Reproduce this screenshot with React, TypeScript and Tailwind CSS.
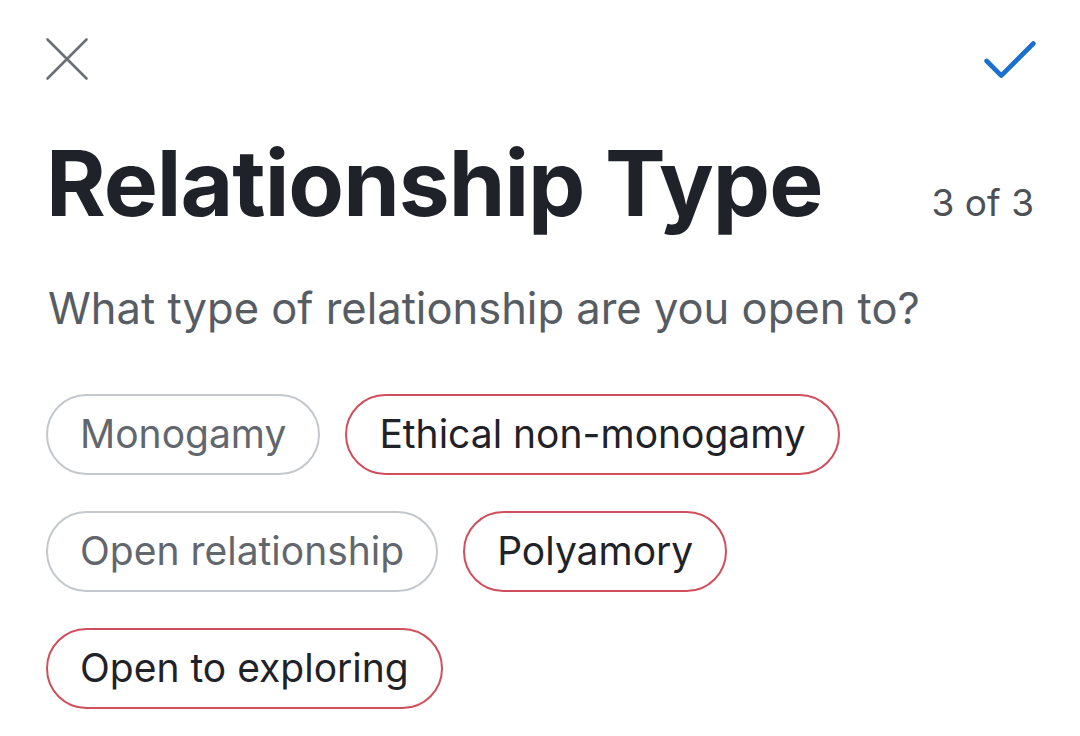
import { Check, X } from "lucide-react";

const OPTIONS = [
  { label: "Monogamy", selected: false },
  { label: "Ethical non-monogamy", selected: true },
  { label: "Open relationship", selected: false },
  { label: "Polyamory", selected: true },
  { label: "Open to exploring", selected: true },
];

function Chip({ label, selected }: { label: string; selected: boolean }) {
  return (
    <div
      className={
        selected
          ? "flex h-[81px] items-center rounded-full border-[2.5px] border-[#d04f5d] px-[32px] text-[39px] text-[#1f2227]"
          : "flex h-[81px] items-center rounded-full border-2 border-[#c4c8cc] px-[32px] text-[39px] text-[#62676d]"
      }
    >
      {label}
    </div>
  );
}

export default function App() {
  return (
    <div className="h-[736px] w-[1080px] bg-white font-['Inter',sans-serif]">
      <div className="flex items-start justify-between pl-[28px] pr-[35px] pt-[20px]">
        <X aria-hidden className="h-[78px] w-[78px] text-[#6c7076]" strokeWidth={0.8} />
        <Check aria-hidden className="mt-[6px] h-[70px] w-[70px] text-[#1b6fce]" strokeWidth={1.6} />
      </div>

      <div className="mt-[40px] flex items-baseline justify-between pl-[46px] pr-[46px]">
        <h1 className="text-[91px] font-bold leading-none tracking-[-1px] text-[#1f2228]">
          Relationship Type
        </h1>
        <span className="text-[37px] text-[#4d5157]">3 of 3</span>
      </div>

      <p className="mt-[56px] pl-[48px] text-[43.5px] leading-none text-[#575c63]">
        What type of relationship are you open to?
      </p>

      <div className="mt-[64px] flex flex-wrap gap-x-[25px] gap-y-[36px] pl-[46px] pr-[40px]">
        {OPTIONS.map((option) => (
          <Chip key={option.label} label={option.label} selected={option.selected} />
        ))}
      </div>
    </div>
  );
}
